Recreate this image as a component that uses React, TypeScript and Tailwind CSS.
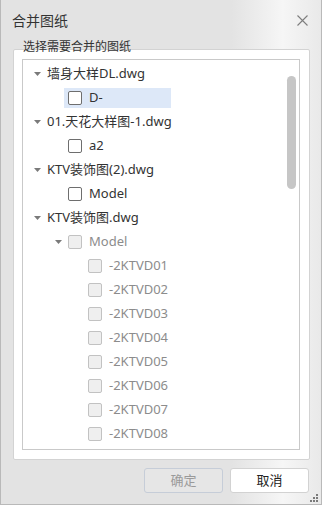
import React from "react";

type Node = {
  label: string;
  level: number;
  kind: "file" | "item";
  expanded?: boolean;
  disabled?: boolean;
  selected?: boolean;
};

const nodes: Node[] = [
  { label: "墙身大样DL.dwg", level: 0, kind: "file", expanded: true },
  { label: "D-", level: 1, kind: "item", selected: true },
  { label: "01.天花大样图-1.dwg", level: 0, kind: "file", expanded: true },
  { label: "a2", level: 1, kind: "item" },
  { label: "KTV装饰图(2).dwg", level: 0, kind: "file", expanded: true },
  { label: "Model", level: 1, kind: "item" },
  { label: "KTV装饰图.dwg", level: 0, kind: "file", expanded: true },
  { label: "Model", level: 1, kind: "item", expanded: true, disabled: true },
  { label: "-2KTVD01", level: 2, kind: "item", disabled: true },
  { label: "-2KTVD02", level: 2, kind: "item", disabled: true },
  { label: "-2KTVD03", level: 2, kind: "item", disabled: true },
  { label: "-2KTVD04", level: 2, kind: "item", disabled: true },
  { label: "-2KTVD05", level: 2, kind: "item", disabled: true },
  { label: "-2KTVD06", level: 2, kind: "item", disabled: true },
  { label: "-2KTVD07", level: 2, kind: "item", disabled: true },
  { label: "-2KTVD08", level: 2, kind: "item", disabled: true },
];

const Caret = () => (
  <svg width="7" height="4" viewBox="0 0 7 4" className="shrink-0">
    <path d="M0 0 L7 0 L3.5 4 Z" fill="#7a7a7a" />
  </svg>
);

const Checkbox = ({ disabled }: { disabled?: boolean }) => (
  <span
    className={`inline-block w-[14px] h-[14px] rounded-[2px] border shrink-0 ${
      disabled ? "border-[#c2c2c2] bg-[#efefef]" : "border-[#6e6e6e] bg-white"
    }`}
  />
);

const TreeRow = ({ node }: { node: Node }) => {
  const indent = node.level === 0 ? "pl-[11px]" : node.level === 1 ? "pl-[32px]" : "pl-[52px]";

  if (node.kind === "file") {
    return (
      <div className={`h-[24px] flex items-center ${indent}`}>
        <Caret />
        <span className="ml-[6px] text-[13px] text-[#333]">{node.label}</span>
      </div>
    );
  }

  return (
    <div className={`h-[24px] flex items-center ${indent}`}>
      <span className="w-[9px] flex items-center shrink-0">{node.expanded && <Caret />}</span>
      <div
        className={`h-[20px] flex items-center pl-[4px] ${
          node.selected ? "bg-[#dde8f8] w-[107px]" : ""
        }`}
      >
        <Checkbox disabled={node.disabled} />
        <span
          className={`ml-[7px] text-[13px] ${node.disabled ? "text-[#8c8c8c]" : "text-[#333]"}`}
        >
          {node.label}
        </span>
      </div>
    </div>
  );
};

export default function App() {
  return (
    <div
      className="w-[322px] h-[505px] flex flex-col border-x border-b border-[#b9b9b9] bg-[linear-gradient(90deg,#e3e3e3_0%,#e3e3e3_72%,#f1f1f1_84%,#f6f6f6_88%,#e9e9e9_100%)]"
      style={{ fontFamily: '"Noto Sans", "Noto Sans CJK SC", sans-serif' }}
    >
      {/* Title bar */}
      <div className="h-[40px] flex items-center justify-between pl-[11px] pr-[13px]">
        <span className="text-[14px] text-[#333]">合并图纸</span>
        <svg width="11" height="11" viewBox="0 0 11 11">
          <path d="M0.5 0.5 L10.5 10.5 M10.5 0.5 L0.5 10.5" stroke="#7d7d7d" strokeWidth="1.1" />
        </svg>
      </div>

      {/* Group box */}
      <div className="relative ml-[12px] mt-[9px] w-[297px] h-[411px] bg-white border border-[#d3d3d3] rounded-[2px] pl-[8px] pt-[9px]">
        <span className="absolute left-[9px] top-[-11px] text-[12px] leading-[16px] text-[#333]">
          选择需要合并的图纸
        </span>
        <div className="relative w-[278px] h-[391px] border border-[#c9c9c9] overflow-hidden pt-[2px]">
          {nodes.map((n, i) => (
            <TreeRow key={i} node={n} />
          ))}
          <div className="absolute left-[264px] top-[16px] w-[9px] h-[113px] rounded-full bg-[#c6c6c6]" />
        </div>
      </div>

      {/* Buttons */}
      <div className="flex justify-end gap-[7px] mt-[8px] pr-[12px]">
        <button className="w-[79px] h-[25px] rounded-[3px] border border-[#c6cdd8] bg-[#e6e6e6] text-[13px] text-[#9a9a9a]">
          确定
        </button>
        <button className="w-[79px] h-[25px] rounded-[3px] border border-[#d2d2d2] bg-white text-[13px] text-[#222]">
          取消
        </button>
      </div>

      {/* Resize grip */}
      <div className="relative flex-1">
        <svg width="8" height="8" viewBox="0 0 8 8" className="absolute right-[3px] bottom-[2px]">
          <rect x="6" y="0" width="2" height="2" fill="#7a7a7a" />
          <rect x="3" y="3" width="2" height="2" fill="#7a7a7a" />
          <rect x="6" y="3" width="2" height="2" fill="#7a7a7a" />
          <rect x="0" y="6" width="2" height="2" fill="#7a7a7a" />
          <rect x="3" y="6" width="2" height="2" fill="#7a7a7a" />
          <rect x="6" y="6" width="2" height="2" fill="#7a7a7a" />
        </svg>
      </div>
    </div>
  );
}
